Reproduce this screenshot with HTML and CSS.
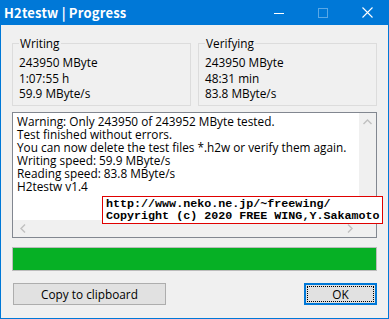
FILE: index.html
```html
<!DOCTYPE html>
<html lang="en">
<head>
  <meta charset="UTF-8">
  <title>H2testw | Progress</title>
  <link rel="stylesheet" href="styles.css">
</head>
<body>

  <div class="window">
    <div class="titlebar">
      <span class="title">H2testw | Progress</span>
      <div class="controls">
        <span class="ctl">
          <svg width="10" height="10" viewBox="0 0 10 10"><path d="M0 5.5h10" stroke="#fff" stroke-width="1"/></svg>
        </span>
        <span class="ctl disabled">
          <svg width="10" height="10" viewBox="0 0 10 10"><rect x="0.5" y="0.5" width="9" height="9" fill="none" stroke="#5aa8e6" stroke-width="1"/></svg>
        </span>
        <span class="ctl">
          <svg width="11" height="11" viewBox="0 0 11 11"><path d="M0.5 0.5l10 10M10.5 0.5l-10 10" stroke="#fff" stroke-width="1.1"/></svg>
        </span>
      </div>
    </div>

    <div class="content">
      <div class="groups">
        <fieldset class="group">
          <legend>Writing</legend>
          <div>243950 MByte</div>
          <div>1:07:55 h</div>
          <div>59.9 MByte/s</div>
        </fieldset>
        <fieldset class="group">
          <legend>Verifying</legend>
          <div>243950 MByte</div>
          <div>48:31 min</div>
          <div>83.8 MByte/s</div>
        </fieldset>
      </div>

      <div class="log">
        <div class="log-text">
          <div>Warning: Only 243950 of 243952 MByte tested.</div>
          <div>Test finished without errors.</div>
          <div>You can now delete the test files *.h2w or verify them again.</div>
          <div>Writing speed: 59.9 MByte/s</div>
          <div>Reading speed: 83.8 MByte/s</div>
          <div>H2testw v1.4</div>
        </div>
        <div class="vscroll">
          <svg width="9" height="6" viewBox="0 0 9 6"><path d="M0.5 5l4-4 4 4" fill="none" stroke="#c0c0c0" stroke-width="1.4"/></svg>
        </div>
        <div class="hscroll">
          <svg width="6" height="9" viewBox="0 0 6 9"><path d="M5 0.5l-4 4 4 4" fill="none" stroke="#c0c0c0" stroke-width="1.4"/></svg>
          <svg width="6" height="9" viewBox="0 0 6 9"><path d="M1 0.5l4 4-4 4" fill="none" stroke="#c0c0c0" stroke-width="1.4"/></svg>
        </div>
        <div class="corner"></div>
      </div>

      <div class="progress"><div class="progress-fill" style="width: 100%"></div></div>

      <div class="buttons">
        <button class="btn btn-copy">Copy to clipboard</button>
        <button class="btn btn-default"><span class="focus">OK</span></button>
      </div>
    </div>

    <div class="stamp">
      <div>http://www.neko.ne.jp/~freewing/</div>
      <div>Copyright (c) 2020 FREE WING,Y.Sakamoto</div>
    </div>
  </div>

</body>
</html>
```

FILE: styles.css
```css
body {
  margin: 0;
  font-family: 'Open Sans', 'Noto Sans', sans-serif;
  font-size: 11.8px;
  color: #000;
}

.window {
  position: relative;
  width: 389px;
  height: 319px;
  box-sizing: border-box;
  background-color: #f0f0f0;
  border: 1px solid #0078d7;
  border-top: none;
}

.titlebar {
  display: flex;
  align-items: center;
  justify-content: space-between;
  height: 25px;
  background-color: #0078d7;
  color: #fff;
  margin: 0 -1px;
  padding-left: 4px;
}

.title {
  font-family: 'Noto Sans CJK JP', 'DejaVu Sans', sans-serif;
  font-size: 13px;
  font-weight: bold;
  letter-spacing: 0.2px;
}

.controls {
  display: flex;
  height: 25px;
}

.ctl {
  display: flex;
  align-items: center;
  justify-content: center;
  width: 44px;
  height: 25px;
}

.ctl svg {
  display: block;
}

.content {
  padding: 10px 11px 0 11px;
}

.groups {
  display: grid;
  grid-template-columns: 1fr 1fr;
  gap: 7px;
}

.group {
  margin: 0;
  padding: 4px 6px 3px 6px;
  border: 1px solid #dcdcdc;
  line-height: 15.5px;
}

.group legend {
  padding: 0 1px;
  line-height: 16px;
}

.log {
  display: grid;
  grid-template-columns: 1fr 17px;
  grid-template-rows: 1fr 17px;
  height: 126px;
  margin-top: 6px;
  box-sizing: border-box;
  border: 1px solid #828790;
  background-color: #fff;
}

.log-text {
  padding: 2px 0 0 4px;
  line-height: 13px;
  white-space: nowrap;
  overflow: hidden;
}

.vscroll {
  display: flex;
  justify-content: center;
  padding-top: 6px;
  background-color: #f0f0f0;
}

.hscroll {
  display: flex;
  align-items: center;
  justify-content: space-between;
  padding: 0 6px 0 7px;
  background-color: #f0f0f0;
}

.corner {
  background-color: #f0f0f0;
}

.progress {
  height: 24px;
  margin-top: 9px;
  box-sizing: border-box;
  border: 1px solid #bcbcbc;
  background-color: #e6e6e6;
}

.progress-fill {
  height: 100%;
  background-color: #06b025;
}

.buttons {
  display: flex;
  justify-content: space-between;
  margin-top: 12px;
}

.btn {
  height: 22px;
  box-sizing: border-box;
  font-family: inherit;
  font-size: 11.8px;
  color: #000;
  background-color: #e1e1e1;
  border: 1px solid #adadad;
  padding: 0;
}

.btn-copy {
  width: 153px;
  margin-left: 1px;
}

.btn-default {
  width: 73px;
  border: 1px solid #0078d7;
  box-shadow: inset 0 0 0 1px #0078d7;
  padding: 2px;
}

.focus {
  display: flex;
  align-items: center;
  justify-content: center;
  height: 100%;
  box-sizing: border-box;
  border: 1px dotted #000;
}

.stamp {
  position: absolute;
  left: 101px;
  top: 196px;
  width: 281px;
  height: 28px;
  box-sizing: border-box;
  padding: 1px 0 0 3px;
  background-color: #fff;
  border: 1px solid #e00000;
  font-family: 'Liberation Mono', monospace;
  font-size: 11.7px;
  font-weight: bold;
  line-height: 12px;
  white-space: nowrap;
}
```
